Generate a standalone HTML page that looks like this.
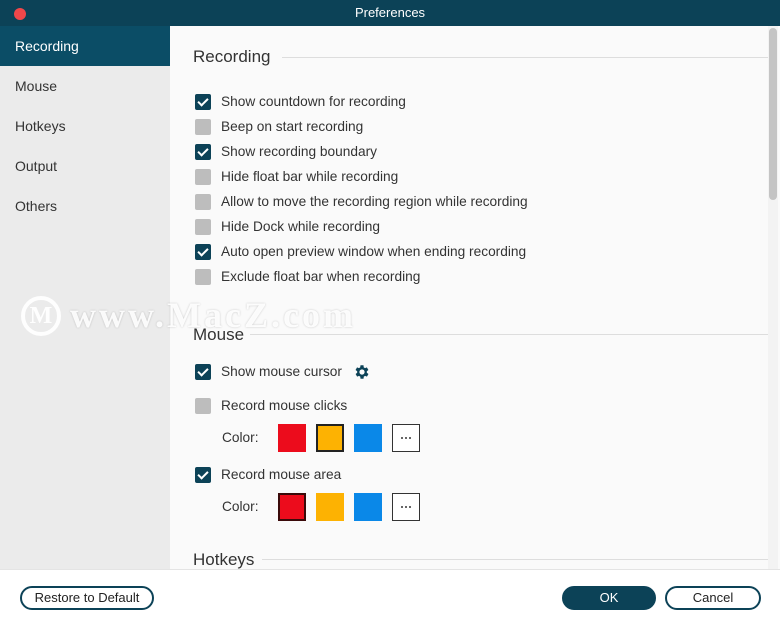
<html><head><style>
*{margin:0;padding:0;box-sizing:border-box}
body{width:780px;height:630px;overflow:hidden;font-family:"Liberation Sans",sans-serif;background:#fafafa;position:relative;color:#333}
.abs{position:absolute}
.title{left:0;top:0;width:780px;height:26px;background:#0c4257;color:#fff;font-size:13px;text-align:center;line-height:26px}
.dot{left:14px;top:8px;width:12px;height:12px;border-radius:50%;background:#f0474a}
.side{left:0;top:26px;width:170px;height:543px;background:#ebebeb}
.si{position:absolute;left:0;width:170px;height:40px;line-height:40px;padding-left:15px;font-size:14px;color:#333}
.si.sel{background:#0b4d66;color:#fff}
.h{font-size:17px;color:#333;left:193px}
.line{height:1px;background:#ddd}
.cb{position:absolute;left:195px;width:16px;height:16px;border-radius:2px;background:#bdbdbd}
.cb.on{background:#0c4257}
.cb.on:after{content:"";position:absolute;left:5px;top:2px;width:4px;height:8px;border:solid #fff;border-width:0 2px 2px 0;transform:rotate(45deg)}
.t{position:absolute;left:221px;font-size:13.7px;color:#333;line-height:16px}
.sw{position:absolute;width:28px;height:28px}
.more{background:#fff;border:1px solid #333}
.more:after{content:"";position:absolute;left:8px;top:12px;width:2px;height:2px;background:#666;box-shadow:4px 0 #666,8px 0 #666}
.btn{position:absolute;top:586px;height:24px;border:2px solid #0c4257;border-radius:12px;font-size:13px;text-align:center;line-height:20px;color:#222;background:#fff}
</style></head><body>
<div class="abs title">Preferences</div>
<div class="abs dot"></div>
<div class="abs side">
<div class="si sel" style="top:0">Recording</div>
<div class="si" style="top:40px">Mouse</div>
<div class="si" style="top:80px">Hotkeys</div>
<div class="si" style="top:120px">Output</div>
<div class="si" style="top:160px">Others</div>
</div>
<div class="abs" style="left:768px;top:26px;width:10px;height:543px;background:#f3f3f3"></div>
<div class="abs" style="left:769px;top:28px;width:8px;height:172px;background:#c4c4c4;border-radius:4px"></div>

<div class="abs h" style="top:47px">Recording</div>
<div class="abs line" style="left:282px;top:57px;width:486px"></div>
<div class="cb on" style="top:94px"></div><div class="t" style="top:94px">Show countdown for recording</div>
<div class="cb" style="top:119px"></div><div class="t" style="top:119px">Beep on start recording</div>
<div class="cb on" style="top:144px"></div><div class="t" style="top:144px">Show recording boundary</div>
<div class="cb" style="top:169px"></div><div class="t" style="top:169px">Hide float bar while recording</div>
<div class="cb" style="top:194px"></div><div class="t" style="top:194px">Allow to move the recording region while recording</div>
<div class="cb" style="top:219px"></div><div class="t" style="top:219px">Hide Dock while recording</div>
<div class="cb on" style="top:244px"></div><div class="t" style="top:244px">Auto open preview window when ending recording</div>
<div class="cb" style="top:269px"></div><div class="t" style="top:269px">Exclude float bar when recording</div>

<div class="abs h" style="top:325px">Mouse</div>
<div class="abs line" style="left:250px;top:334px;width:518px"></div>
<div class="cb on" style="top:364px"></div><div class="t" style="top:364px">Show mouse cursor</div>
<svg class="abs" style="left:353px;top:363px" width="18" height="18" viewBox="0 0 24 24"><path fill="#0c4257" d="M19.4 13a7.5 7.5 0 0 0 0-2l2.1-1.6-2-3.5-2.5 1a7 7 0 0 0-1.7-1L15 3h-4l-.4 2.9a7 7 0 0 0-1.7 1l-2.5-1-2 3.5L6.6 11a7.5 7.5 0 0 0 0 2l-2.1 1.6 2 3.5 2.5-1a7 7 0 0 0 1.7 1L11 21h4l.4-2.9a7 7 0 0 0 1.7-1l2.5 1 2-3.5zM13 15.5a3.5 3.5 0 1 1 0-7 3.5 3.5 0 0 1 0 7z" transform="translate(-1 0)"/></svg>
<div class="cb" style="top:398px"></div><div class="t" style="top:398px">Record mouse clicks</div>
<div class="t" style="top:430px;left:222px">Color:</div>
<div class="sw" style="left:278px;top:424px;background:#ec0c1c"></div>
<div class="sw" style="left:316px;top:424px;background:#fdb202;border:2px solid #222"></div>
<div class="sw" style="left:354px;top:424px;background:#0a88e8"></div>
<div class="sw more" style="left:392px;top:424px"></div>
<div class="cb on" style="top:467px"></div><div class="t" style="top:467px">Record mouse area</div>
<div class="t" style="top:499px;left:222px">Color:</div>
<div class="sw" style="left:278px;top:493px;background:#ec0c1c;border:2px solid #3a0a0a"></div>
<div class="sw" style="left:316px;top:493px;background:#fdb202"></div>
<div class="sw" style="left:354px;top:493px;background:#0a88e8"></div>
<div class="sw more" style="left:392px;top:493px"></div>

<div class="abs h" style="top:550px">Hotkeys</div>
<div class="abs line" style="left:262px;top:559px;width:506px"></div>

<div class="abs" style="left:21px;top:296px;width:40px;height:40px;border:4px solid rgba(255,255,255,.92);border-radius:50%;color:rgba(255,255,255,.95);font:bold 24px 'Liberation Serif',serif;text-align:center;line-height:32px">M</div>
<div class="abs" style="left:70px;top:294px;font:bold 36px 'Liberation Serif',serif;color:rgba(255,255,255,.92);letter-spacing:3px;text-shadow:0 0 2px rgba(0,0,0,.2)">www.MacZ.com</div>

<div class="abs" style="left:0;top:569px;width:780px;height:61px;background:#fff;border-top:1px solid #e4e4e4"></div>
<div class="btn" style="left:20px;width:134px">Restore to Default</div>
<div class="btn" style="left:562px;width:94px;background:#0c4257;color:#fff">OK</div>
<div class="btn" style="left:665px;width:96px">Cancel</div>
</body></html>
